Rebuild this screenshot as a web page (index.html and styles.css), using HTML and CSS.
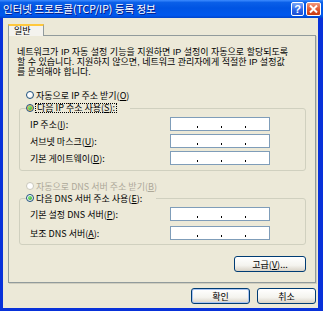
FILE: index.html
```html
<!DOCTYPE HTML>
<html>
<head>
    <meta charset="utf-8">
    <title>인터넷 프로토콜(TCP/IP) 등록 정보</title>
    <link rel="stylesheet" href="styles.css">
</head>

<body>
<div class="window">

    <!--title bar-------------------------------------------------------->
    <div class="titlebar">
        <span class="title">인터넷 프로토콜(TCP/IP) 등록 정보</span>
        <span class="tbtn help">?</span>
        <span class="tbtn close">
            <svg width="13" height="12" viewBox="0 0 13 12">
                <path d="M3 2.5 L10 9.5 M10 2.5 L3 9.5" stroke="#fff" stroke-width="2" fill="none"/>
            </svg>
        </span>
    </div>

    <!--client area------------------------------------------------------>
    <div class="client">
        <div class="tabs"><span class="tab">일반</span></div>

        <div class="panel">
            <div class="intro">
                <div class="line">네트워크가 IP 자동 설정 기능을 지원하면 IP 설정이 자동으로 할당되도록</div>
                <div class="line">할 수 있습니다. 지원하지 않으면, 네트워크 관리자에게 적절한 IP 설정값</div>
                <div class="line">를 문의해야 합니다.</div>
            </div>

            <div class="radio"><span class="rb"></span>자동으로 IP 주소 받기(<u>O</u>)</div>

            <fieldset class="group">
                <legend class="radio"><span class="rb checked hover"></span><span class="focus">다음 IP 주소 사용(<u>S</u>):</span></legend>
                <div class="rows">
                    <div class="row">
                        <span>IP 주소(<u>I</u>):</span>
                        <div class="ipbox"><span class="seg"></span><span class="sep"></span><span class="seg"></span><span class="sep"></span><span class="seg"></span><span class="sep"></span><span class="seg"></span></div>
                    </div>
                    <div class="row">
                        <span>서브넷 마스크(<u>U</u>):</span>
                        <div class="ipbox"><span class="seg"></span><span class="sep"></span><span class="seg"></span><span class="sep"></span><span class="seg"></span><span class="sep"></span><span class="seg"></span></div>
                    </div>
                    <div class="row">
                        <span>기본 게이트웨이(<u>D</u>):</span>
                        <div class="ipbox"><span class="seg"></span><span class="sep"></span><span class="seg"></span><span class="sep"></span><span class="seg"></span><span class="sep"></span><span class="seg"></span></div>
                    </div>
                </div>
            </fieldset>

            <div class="radio disabled dns-auto"><span class="rb"></span>자동으로 DNS 서버 주소 받기(<u>B</u>)</div>

            <fieldset class="group dns">
                <legend class="radio"><span class="rb checked"></span><span>다음 DNS 서버 주소 사용(<u>E</u>):</span></legend>
                <div class="rows">
                    <div class="row">
                        <span>기본 설정 DNS 서버(<u>P</u>):</span>
                        <div class="ipbox"><span class="seg"></span><span class="sep"></span><span class="seg"></span><span class="sep"></span><span class="seg"></span><span class="sep"></span><span class="seg"></span></div>
                    </div>
                    <div class="row">
                        <span>보조 DNS 서버(<u>A</u>):</span>
                        <div class="ipbox"><span class="seg"></span><span class="sep"></span><span class="seg"></span><span class="sep"></span><span class="seg"></span><span class="sep"></span><span class="seg"></span></div>
                    </div>
                </div>
            </fieldset>

            <div class="adv"><button class="btn wide">고급(<u>V</u>)...</button></div>
        </div>

        <div class="actions">
            <button class="btn default">확인</button>
            <button class="btn">취소</button>
        </div>
    </div>

</div>
</body>

</html>
```

FILE: styles.css
```css
html,
body {
    margin: 0;
    padding: 0;
}

body {
    font-family: "Noto Sans CJK KR", "Liberation Sans", sans-serif;
    font-size: 9px;
    color: #000;
    background: #fff;
}

.window {
    width: 323px;
    height: 311px;
    box-sizing: border-box;
    display: flex;
    flex-direction: column;
    background: #0831D9;
    padding-bottom: 3px;
}

/* title bar */
.titlebar {
    height: 18px;
    flex: none;
    display: flex;
    align-items: center;
    padding: 0 2px 0 3px;
    background: linear-gradient(#3D8BFF 0%, #0A5FE8 14%, #0054E3 45%, #0058EE 85%, #0044CC 100%);
}

.title {
    flex: 1;
    color: #fff;
    font-size: 10.5px;
    line-height: 18px;
    white-space: nowrap;
    text-shadow: 1px 1px 0 #0A1883;
}

.tbtn {
    width: 13px;
    height: 14px;
    box-sizing: border-box;
    border: 1px solid #fff;
    border-radius: 2px;
    display: flex;
    align-items: center;
    justify-content: center;
    color: #fff;
}

.help {
    background: linear-gradient(#7AA6F7, #2E67EA 55%, #1B4ED2);
    font-family: "Liberation Sans", sans-serif;
    font-weight: bold;
    font-size: 11px;
}

.close {
    width: 15px;
    margin-left: 2px;
    background: linear-gradient(#F09A80, #E25A33 50%, #C63A12);
}

/* client */
.client {
    flex: 1;
    margin: 0 5px 0 3px;
    background: #ECE9D8;
    display: flex;
    flex-direction: column;
}

.tabs {
    display: flex;
    margin: 6px 0 0 5px;
    height: 11px;
}

.tab {
    width: 36px;
    height: 12px;
    box-sizing: border-box;
    border: 1px solid #919B9C;
    border-top: 2px solid #FFC83C;
    border-bottom: none;
    background: #F4F3EE;
    padding-left: 5px;
    line-height: 9px;
    position: relative;
    z-index: 1;
}

.panel {
    height: 248px;
    box-sizing: border-box;
    margin: 0 2px 0 5px;
    border: 1px solid #919B9C;
    background: #ECE9D8;
    box-shadow: 1px 1px 0 #D0CEBF;
}

.intro {
    margin: 11px 0 0 8px;
    font-family: "Liberation Sans", "Noto Sans CJK KR", sans-serif;
}

.line {
    height: 10px;
    line-height: 10px;
    white-space: nowrap;
}

/* radios */
.radio {
    display: flex;
    align-items: center;
    height: 10px;
    margin: 13px 0 0 17px;
    white-space: nowrap;
}

.rb {
    position: relative;
    flex: none;
    width: 8px;
    height: 8px;
    box-sizing: border-box;
    border: 1px solid #1C5180;
    border-radius: 50%;
    background: radial-gradient(circle at 35% 35%, #fff 40%, #DCD9CC);
    margin-right: 2px;
}

.rb.hover {
    box-shadow: inset 0 0 0 1px #F8B636;
}

.rb.checked:after {
    content: "";
    position: absolute;
    left: 1px;
    top: 1px;
    width: 4px;
    height: 4px;
    border-radius: 50%;
    background: radial-gradient(circle at 35% 35%, #7FE87B, #21A121);
}

.disabled {
    color: #ACA899;
}

.disabled .rb {
    border-color: #CAC8BB;
    background: #fff;
}

.dns-auto {
    margin-top: 10px;
}

.focus {
    outline: 1px dotted #000;
    line-height: 8px;
    padding: 0 1px;
}

/* group boxes */
.group {
    margin: 3px 9px 0 10px;
    padding: 0;
    border: 1px solid #D0D0BF;
    border-radius: 3px;
}

.group.dns {
    margin-top: 2px;
}

.group legend {
    margin: 0 0 0 6px;
    padding: 0 14px 0 0;
}

.rows {
    display: flex;
    flex-direction: column;
    gap: 3px;
    padding: 4px 35px 5px 10px;
}

.dns .rows {
    gap: 5px;
    padding-bottom: 4px;
}

.row {
    display: flex;
    align-items: center;
    justify-content: space-between;
    height: 14px;
    white-space: nowrap;
}

.ipbox {
    width: 100px;
    height: 14px;
    box-sizing: border-box;
    border: 1px solid #7F9DB9;
    background: #fff;
    display: flex;
    align-items: flex-end;
    padding: 0 0 2px 3px;
}

.seg {
    flex: 1;
}

.sep {
    width: 1px;
    height: 2px;
    background: #000;
}

/* buttons */
.btn {
    width: 59px;
    height: 16px;
    box-sizing: border-box;
    padding: 0;
    border: 1px solid #003C74;
    border-radius: 3px;
    background: linear-gradient(#FFFFFF, #F4F3EE 60%, #D8D2C6);
    font-family: inherit;
    font-size: 9px;
    line-height: 13px;
    color: #000;
    text-align: center;
}

.btn.default {
    box-shadow: inset 0 0 0 1px #A9C4F2;
}

.btn.wide {
    width: 72px;
}

.adv {
    display: flex;
    justify-content: flex-end;
    margin: 11px 9px 0 0;
}

.actions {
    display: flex;
    justify-content: flex-end;
    gap: 7px;
    margin: 5px 2px 0 0;
}
```
